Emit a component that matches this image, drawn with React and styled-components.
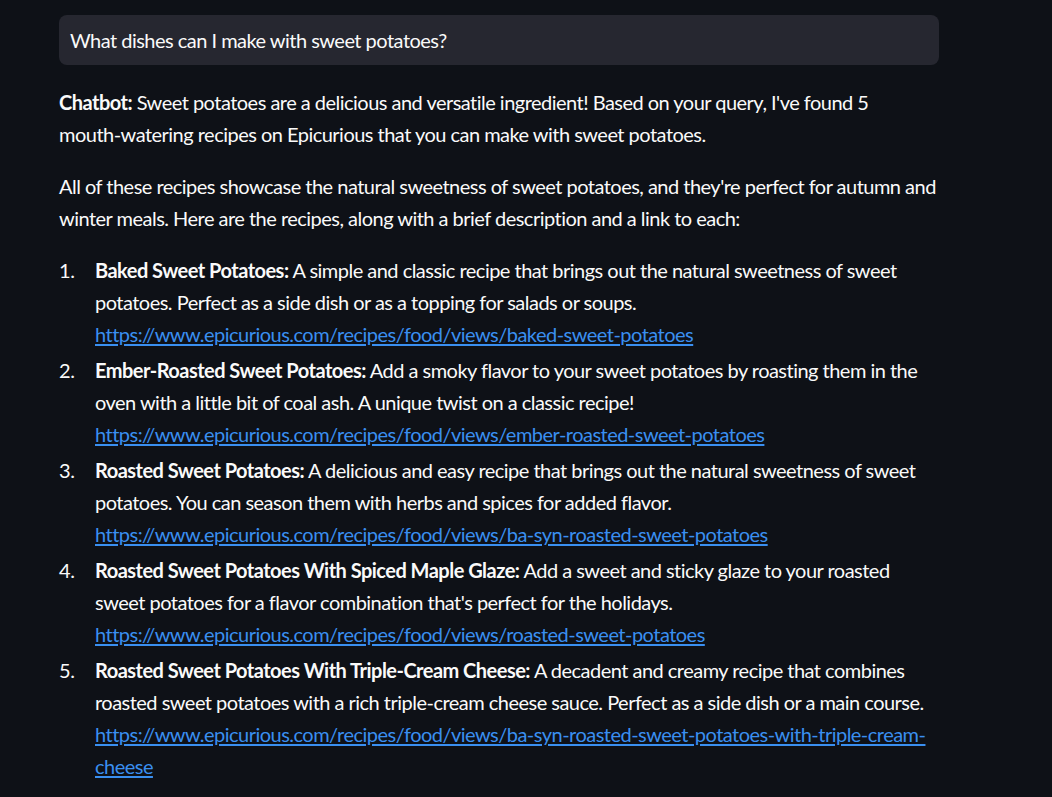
import React from 'react';
import styled, { createGlobalStyle } from 'styled-components';

const GlobalStyle = createGlobalStyle`
  html, body {
    margin: 0;
    padding: 0;
    background: #0e1117;
  }
  body {
    font-family: Lato, "Noto Sans", sans-serif;
    color: #fafafa;
  }
`;

const Page = styled.div`
  min-height: 797px;
  background: #0e1117;
  padding: 15px 0 0 59px;
  box-sizing: border-box;
`;

const Column = styled.div`
  width: 880px;
  font-size: 20px;
  line-height: 32px;
  letter-spacing: -0.52px;
`;

const Question = styled.div`
  height: 50px;
  background: #262730;
  border-radius: 8px;
  display: flex;
  align-items: center;
  padding: 0 11px;
  margin-bottom: 21px;
`;

const Paragraph = styled.p`
  margin: 0 0 20px;
`;

const NoWrap = styled.span`
  white-space: nowrap;
`;

const List = styled.ol`
  margin: 0;
  padding-left: 20px;
`;

const Item = styled.li`
  margin: 4px 0;
  padding-left: 16px;
  &::marker {
    font-weight: 400;
  }
  strong {
    font-weight: 700;
  }
`;

const Link = styled.a`
  color: #3a8ff0;
  text-decoration: underline;
  text-underline-offset: 2px;
`;

const recipes = [
  {
    title: 'Baked Sweet Potatoes:',
    text: ' A simple and classic recipe that brings out the natural sweetness of sweet potatoes. Perfect as a side dish or as a topping for salads or soups.',
    slug: 'baked-sweet-potatoes',
  },
  {
    title: 'Ember-Roasted Sweet Potatoes:',
    text: ' Add a smoky flavor to your sweet potatoes by roasting them in the oven with a little bit of coal ash. A unique twist on a classic recipe!',
    slug: 'ember-roasted-sweet-potatoes',
  },
  {
    title: 'Roasted Sweet Potatoes:',
    text: ' A delicious and easy recipe that brings out the natural sweetness of sweet potatoes. You can season them with herbs and spices for added flavor.',
    slug: 'ba-syn-roasted-sweet-potatoes',
  },
  {
    title: 'Roasted Sweet Potatoes With Spiced Maple Glaze:',
    text: " Add a sweet and sticky glaze to your roasted sweet potatoes for a flavor combination that's perfect for the holidays.",
    slug: 'roasted-sweet-potatoes',
  },
  {
    title: 'Roasted Sweet Potatoes With Triple-Cream Cheese:',
    text: ' A decadent and creamy recipe that combines roasted sweet potatoes with a rich triple-cream cheese sauce. Perfect as a side dish or a main course.',
    slug: 'ba-syn-roasted-sweet-potatoes-with-triple-cream-cheese',
  },
];

const App = () => (
  <Page>
    <GlobalStyle />
    <Column>
      <Question>What dishes can I make with sweet potatoes?</Question>
      <Paragraph>
        <strong>Chatbot:</strong> Sweet potatoes are a delicious and versatile ingredient! Based on your query, I've found 5{' '}
        <NoWrap>mouth-watering</NoWrap> recipes on Epicurious that you can make with sweet potatoes.
      </Paragraph>
      <Paragraph>
        All of these recipes showcase the natural sweetness of sweet potatoes, and they're perfect for autumn and
        winter meals. Here are the recipes, along with a brief description and a link to each:
      </Paragraph>
      <List>
        {recipes.map((r) => {
          const url = `https://www.epicurious.com/recipes/food/views/${r.slug}`;
          return (
            <Item key={r.slug}>
              <strong>{r.title}</strong>
              {r.text}
              <br />
              <Link href={url}>{url}</Link>
            </Item>
          );
        })}
      </List>
    </Column>
  </Page>
);

export default App;
